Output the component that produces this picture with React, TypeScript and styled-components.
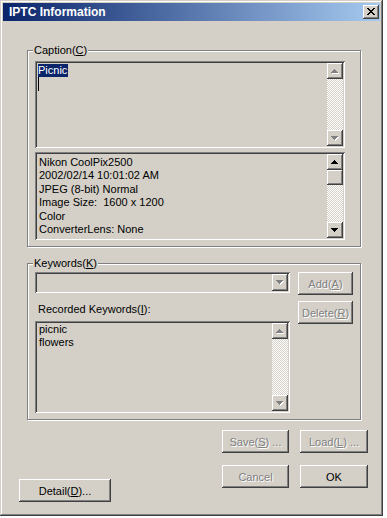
import styled, { createGlobalStyle } from "styled-components";

const GlobalStyle = createGlobalStyle`
  body {
    margin: 0;
    background: #fff;
    font-family: "Liberation Sans", Arial, sans-serif;
    font-size: 11px;
  }
`;

const FACE = "#d4d0c8";

const Window = styled.div`
  width: 383px;
  height: 516px;
  box-sizing: border-box;
  padding: 3px;
  background: ${FACE};
  box-shadow: inset -1px -1px #404040, inset 1px 1px ${FACE},
    inset -2px -2px #808080, inset 2px 2px #fff;
  display: flex;
  flex-direction: column;
`;

const TitleBar = styled.div`
  height: 18px;
  padding: 0 1px 0 6px;
  display: flex;
  align-items: center;
  justify-content: space-between;
  background: linear-gradient(to right, #0a246a, #a6caf0);
`;

const TitleText = styled.span`
  color: #fff;
  font-weight: 700;
  font-size: 12px;
  line-height: 18px;
`;

const raised = `
  background: ${FACE};
  box-shadow: inset -1px -1px #404040, inset 1px 1px #fff,
    inset -2px -2px #808080, inset 2px 2px ${FACE};
`;

const CloseButton = styled.div`
  ${raised}
  width: 16px;
  height: 14px;
  display: flex;
  align-items: center;
  justify-content: center;
  padding-bottom: 1px;
  box-sizing: border-box;
`;

const GroupBox = styled.fieldset<{ $mt: number; $padTop: number; $padRight: number }>`
  margin: ${(p) => p.$mt}px 0 0 24px;
  width: 334px;
  box-sizing: border-box;
  padding: ${(p) => p.$padTop}px ${(p) => p.$padRight}px 6px 7px;
  border: 1px solid #808080;
  box-shadow: 1px 1px 0 #fff, inset 1px 1px 0 #fff;
  min-inline-size: 0;
`;

const Legend = styled.legend`
  padding: 0 1px;
  margin-left: -2px;
  line-height: 13px;
  height: 13px;
  background: ${FACE};
  color: #000;
`;

const Sunken = styled.div<{ $w: number; $h: number; $mt?: number }>`
  width: ${(p) => p.$w}px;
  height: ${(p) => p.$h}px;
  margin-top: ${(p) => p.$mt ?? 0}px;
  box-sizing: border-box;
  padding: 2px;
  background: ${FACE};
  box-shadow: inset 1px 1px #808080, inset -1px -1px #fff,
    inset 2px 2px #404040, inset -2px -2px ${FACE};
  display: flex;
`;

const PaneText = styled.div<{ $top: number; $left: number }>`
  flex: 1;
  padding: ${(p) => p.$top}px 0 0 ${(p) => p.$left}px;
  line-height: 13.4px;
  white-space: pre;
  color: #000;
  overflow: hidden;
`;

const Selected = styled.span`
  background: #0a246a;
  color: #fff;
  display: inline-block;
  line-height: 13px;
  padding-right: 1px;
`;

const Caret = styled.div`
  width: 1px;
  height: 14px;
  background: #000;
`;

const ScrollBar = styled.div`
  width: 16px;
  display: flex;
  flex-direction: column;
`;

const ArrowButton = styled.div`
  ${raised}
  width: 16px;
  height: 16px;
  flex: none;
  display: flex;
  align-items: center;
  justify-content: center;
`;

const Thumb = styled.div`
  ${raised}
  height: 15px;
  flex: none;
`;

const Track = styled.div`
  flex: 1;
  background: repeating-conic-gradient(${FACE} 0 25%, #fff 0 50%) 0 0 / 2px 2px;
`;

const ComboArrow = styled(ArrowButton)`
  height: 17px;
  margin-left: auto;
`;

const KeywordsBody = styled.div`
  display: flex;
  gap: 8px;
`;

const LeftCol = styled.div`
  display: flex;
  flex-direction: column;
`;

const FieldLabel = styled.div`
  margin: 10px 0 5px 3px;
  line-height: 13px;
`;

const RightCol = styled.div`
  display: flex;
  flex-direction: column;
  gap: 6px;
`;

const Button = styled.button<{ $w?: number }>`
  ${raised}
  width: ${(p) => (p.$w ? `${p.$w}px` : "100%")};
  height: 23px;
  border: none;
  padding: 0;
  font: 11px "Liberation Sans", Arial, sans-serif;
  color: #000;
  &:disabled {
    color: #808080;
    text-shadow: 1px 1px #fff;
  }
`;

const Footer = styled.div`
  display: flex;
  justify-content: space-between;
  align-items: flex-end;
  padding: 10px 12px 0 16px;
`;

const ButtonGrid = styled.div`
  display: grid;
  grid-template-columns: 67px 68px;
  grid-template-rows: 23px 23px;
  column-gap: 11px;
  row-gap: 12px;
  padding-bottom: 14px;
`;

const Triangle = ({ down, disabled }: { down?: boolean; disabled?: boolean }) => {
  const d = down
    ? "M0 0h7v1H6v1H5v1H4v1H3V3H2V2H1V1H0z"
    : "M3 0h1v1h1v1h1v1h1v1H0V3h1V2h1V1h1z";
  return (
    <svg width="8" height="5" viewBox="0 0 8 5" shapeRendering="crispEdges">
      {disabled && <path d={d} fill="#fff" transform="translate(1 1)" />}
      <path d={d} fill={disabled ? "#808080" : "#000"} />
    </svg>
  );
};

const CloseGlyph = () => {
  const rows = ["xx....xx", ".xx..xx.", "..xxxx..", "...xx...", "..xxxx..", ".xx..xx.", "xx....xx"];
  return (
    <svg width="8" height="7" viewBox="0 0 8 7" shapeRendering="crispEdges">
      {rows.flatMap((row, y) =>
        row.split("").map((c, x) => (c === "x" ? <rect key={`${x}-${y}`} x={x} y={y} width="1" height="1" fill="#000" /> : null))
      )}
    </svg>
  );
};

const Scroll = ({ disabled, thumb }: { disabled?: boolean; thumb?: boolean }) => (
  <ScrollBar>
    <ArrowButton>
      <Triangle disabled={disabled} />
    </ArrowButton>
    {thumb && <Thumb />}
    <Track />
    <ArrowButton>
      <Triangle down disabled={disabled} />
    </ArrowButton>
  </ScrollBar>
);

const info = [
  "Nikon CoolPix2500",
  "2002/02/14 10:01:02 AM",
  "JPEG (8-bit) Normal",
  "Image Size:  1600 x 1200",
  "Color",
  "ConverterLens: None",
];

export default function App() {
  return (
    <>
      <GlobalStyle />
      <Window>
        <TitleBar>
          <TitleText>IPTC Information</TitleText>
          <CloseButton>
            <CloseGlyph />
          </CloseButton>
        </TitleBar>

        <GroupBox $mt={23} $padTop={4} $padRight={15}>
          <Legend>
            Caption(<u>C</u>)
          </Legend>
          <Sunken $w={310} $h={87}>
            <PaneText $top={1} $left={1}>
              <Selected>Picnic</Selected>
              <Caret />
            </PaneText>
            <Scroll disabled />
          </Sunken>
          <Sunken $w={310} $h={88} $mt={4}>
            <PaneText $top={2} $left={2}>
              {info.join("\n")}
            </PaneText>
            <Scroll thumb />
          </Sunken>
        </GroupBox>

        <GroupBox $mt={10} $padTop={2} $padRight={7}>
          <Legend>
            Keywords(<u>K</u>)
          </Legend>
          <KeywordsBody>
            <LeftCol>
              <Sunken $w={255} $h={21}>
                <ComboArrow>
                  <Triangle down disabled />
                </ComboArrow>
              </Sunken>
              <FieldLabel>
                Recorded Keywords(<u>I</u>):
              </FieldLabel>
              <Sunken $w={255} $h={92}>
                <PaneText $top={0} $left={2}>
                  {"picnic\nflowers"}
                </PaneText>
                <Scroll disabled />
              </Sunken>
            </LeftCol>
            <RightCol>
              <Button $w={55} disabled>
                Add(<u>A</u>)
              </Button>
              <Button $w={55} disabled>
                Delete(<u>R</u>)
              </Button>
            </RightCol>
          </KeywordsBody>
        </GroupBox>

        <Footer>
          <Button $w={92}>
            Detail(<u>D</u>)...
          </Button>
          <ButtonGrid>
            <Button disabled>
              Save(<u>S</u>) ...
            </Button>
            <Button disabled>
              Load(<u>L</u>) ...
            </Button>
            <Button disabled>Cancel</Button>
            <Button>OK</Button>
          </ButtonGrid>
        </Footer>
      </Window>
    </>
  );
}
